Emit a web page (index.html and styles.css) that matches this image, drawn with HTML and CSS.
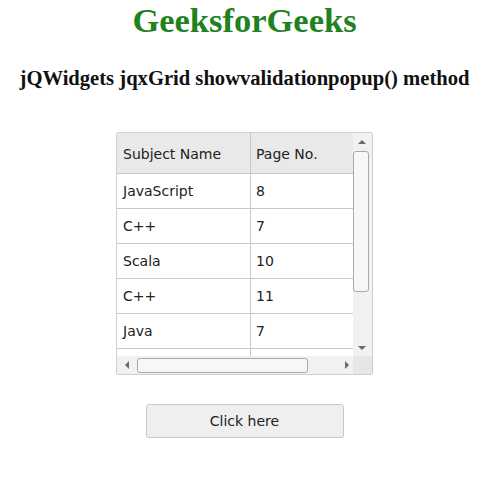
FILE: index.html
```html
<!DOCTYPE html>
<html>
<head>
<meta charset="utf-8">
<link rel="stylesheet" href="styles.css">
</head>
<body>
<div class="page">
  <h1 class="brand">GeeksforGeeks</h1>
  <h3 class="subtitle">jQWidgets jqxGrid showvalidationpopup() method</h3>
  <div class="grid">
    <div class="content">
      <div class="row head">
        <div class="cell c1">Subject Name</div>
        <div class="cell c2">Page No.</div>
      </div>
      <div class="row"><div class="cell c1">JavaScript</div><div class="cell c2">8</div></div>
      <div class="row"><div class="cell c1">C++</div><div class="cell c2">7</div></div>
      <div class="row"><div class="cell c1">Scala</div><div class="cell c2">10</div></div>
      <div class="row"><div class="cell c1">C++</div><div class="cell c2">11</div></div>
      <div class="row"><div class="cell c1">Java</div><div class="cell c2">7</div></div>
      <div class="row"><div class="cell c1"></div><div class="cell c2"></div></div>
    </div>
    <div class="vscroll">
      <div class="vbtn"><span class="arrow up"></span></div>
      <div class="vthumb"></div>
      <div class="spacer"></div>
      <div class="vbtn"><span class="arrow down"></span></div>
    </div>
    <div class="hscroll">
      <div class="hbtn left-btn"><span class="arrow left"></span></div>
      <div class="hthumb"></div>
      <div class="spacer"></div>
      <div class="hbtn right-btn"><span class="arrow right"></span></div>
    </div>
    <div class="corner"></div>
  </div>
  <div class="actions">
    <button class="btn">Click here</button>
  </div>
</div>
</body>
</html>
```

FILE: styles.css
```css
html, body {
  margin: 0;
  padding: 0;
  background: #ffffff;
}

.page {
  width: 489px;
  display: flex;
  flex-direction: column;
  align-items: center;
}

.brand {
  margin: 0;
  font-family: "Liberation Serif", serif;
  font-weight: bold;
  font-size: 34.5px;
  line-height: 40px;
  color: #1f821f;
}

.subtitle {
  margin: 26px 0 0 0;
  font-family: "Liberation Serif", serif;
  font-weight: bold;
  font-size: 20.6px;
  line-height: 24px;
  color: #111;
}

.grid {
  margin-top: 42px;
  align-self: flex-start;
  margin-left: 116px;
  display: grid;
  grid-template-columns: 236px 19px;
  grid-template-rows: 223px 18px;
  border: 1px solid #cfcfcf;
  border-radius: 2px;
  background: #fff;
  font-family: "DejaVu Sans", Verdana, sans-serif;
  font-size: 14px;
  color: #222;
}

.content {
  overflow: hidden;
}

.row {
  display: flex;
  height: 34px;
  border-bottom: 1px solid #c8c8c8;
  flex-shrink: 0;
}

.row.head {
  height: 40px;
  background: #e9e9e9;
}

.row.head .cell {
  padding-top: 2px;
}

.cell {
  display: flex;
  align-items: center;
  padding-left: 6px;
  box-sizing: border-box;
}

.c1 {
  width: 134px;
  border-right: 1px solid #c8c8c8;
}

.c2 {
  flex: 1;
  padding-left: 5px;
}

.vscroll {
  display: flex;
  flex-direction: column;
  background: #f1f1f1;
}

.vbtn {
  height: 17px;
  display: flex;
  align-items: center;
  justify-content: center;
  padding-right: 2px;
  flex-shrink: 0;
}

.vthumb {
  height: 139px;
  width: 14px;
  margin-top: 1px;
  border: 1px solid #a9a9a9;
  border-radius: 3px;
  background: #f7f7f7;
  flex-shrink: 0;
}

.spacer {
  flex: 1;
}

.hscroll {
  display: flex;
  align-items: center;
  background: #f1f1f1;
}

.hbtn {
  height: 18px;
  display: flex;
  align-items: center;
  justify-content: center;
  flex-shrink: 0;
}

.left-btn {
  width: 19px;
}

.right-btn {
  width: 13px;
}

.hthumb {
  width: 169px;
  height: 13px;
  margin-left: 1px;
  border: 1px solid #a9a9a9;
  border-radius: 3px;
  background: #f7f7f7;
}

.corner {
  background: #e6e6e6;
}

.arrow {
  width: 0;
  height: 0;
  display: block;
}

.arrow.up {
  border-left: 4px solid transparent;
  border-right: 4px solid transparent;
  border-bottom: 4px solid #5f705f;
}

.arrow.down {
  border-left: 4px solid transparent;
  border-right: 4px solid transparent;
  border-top: 4px solid #5f705f;
}

.arrow.left {
  border-top: 4px solid transparent;
  border-bottom: 4px solid transparent;
  border-right: 4px solid #5f705f;
}

.arrow.right {
  border-top: 4px solid transparent;
  border-bottom: 4px solid transparent;
  border-left: 4px solid #5f705f;
}

.actions {
  margin-top: 29px;
}

.btn {
  width: 198px;
  height: 34px;
  border: 1px solid #c9c9c9;
  border-radius: 3px;
  background: #efefef;
  font-family: "DejaVu Sans", Verdana, sans-serif;
  font-size: 14px;
  color: #222;
  padding: 0;
}
```
